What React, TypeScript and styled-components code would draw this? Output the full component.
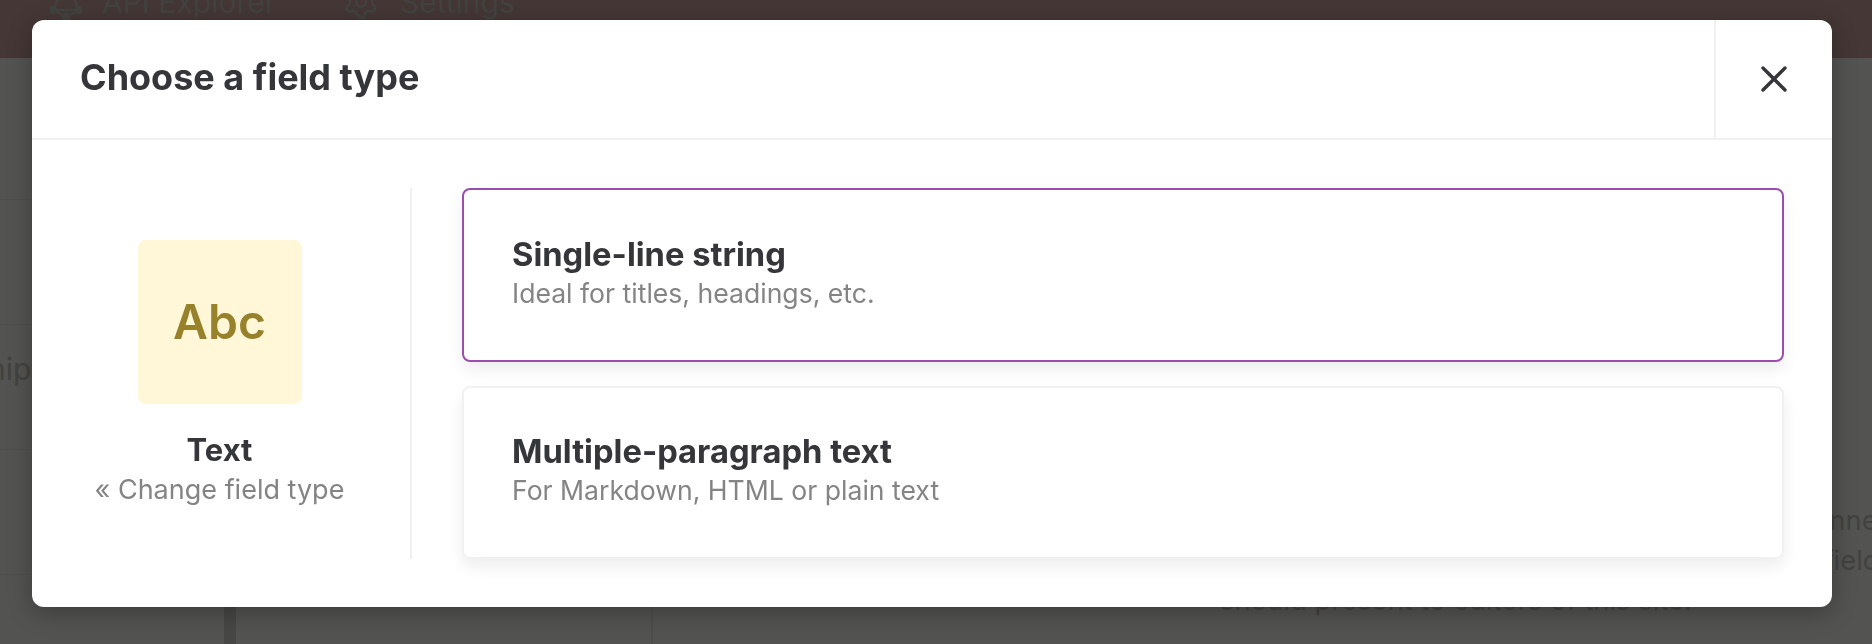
import { Settings } from "lucide-react";
import styled, { createGlobalStyle } from "styled-components";

const GlobalStyle = createGlobalStyle`
  html, body {
    margin: 0;
    height: 100%;
    overflow: hidden;
    background: #535351;
    font-family: Inter, "Liberation Sans", sans-serif;
  }
`;

const Page = styled.div`
  height: 644px;
  overflow: hidden;
  display: flex;
  flex-direction: column;
  color: #424240;
`;

const Nav = styled.nav`
  flex: none;
  height: 58px;
  display: flex;
  gap: 66px;
  padding-left: 50px;
  background: #443735;
`;

const NavItem = styled.div`
  display: flex;
  align-items: center;
  gap: 20px;
  height: 4px;
  font-size: 30px;
  line-height: 30px;
`;

const Columns = styled.div`
  flex: 1;
  display: flex;
  min-height: 0;
`;

const Sidebar = styled.aside`
  flex: none;
  width: 224px;
  padding-top: 17px;
  border-right: 12px solid #474745;
`;

const SideRow = styled.div`
  height: 124px;
  padding-top: 24px;
  box-sizing: border-box;
  margin-bottom: 1px;
  box-shadow: 0 1px 0 #4f4f4d;
  font-size: 30px;
  line-height: 40px;
  white-space: nowrap;
  overflow: hidden;
`;

const SideLabel = styled.span<{ $pull: number }>`
  display: block;
  margin-left: ${(p) => -p.$pull}px;
`;

const ListColumn = styled.div`
  flex: none;
  width: 415px;
  border-right: 2px solid #4d4d4b;
`;

const Help = styled.div`
  flex: 1;
  min-width: 0;
  overflow: hidden;
  padding: 442px 0 0 567px;
  font-size: 27.4px;
  line-height: 40px;
  white-space: nowrap;
  text-align: right;
`;

const HelpLine = styled.div<{ $bleed?: number }>`
  margin-right: ${(p) => -(p.$bleed ?? 0)}px;
  &:last-child {
    text-align: left;
  }
`;

const Overlay = styled.div`
  position: fixed;
  inset: 0;
  padding: 20px 40px 37px 32px;
  display: flex;
  align-items: flex-start;
`;

const Modal = styled.div`
  width: 1800px;
  height: 587px;
  display: flex;
  flex-direction: column;
  background: #fff;
  border-radius: 12px;
  box-shadow: 0 6px 24px rgba(0, 0, 0, 0.28);
`;

const ModalHeader = styled.header`
  flex: none;
  height: 120px;
  box-sizing: border-box;
  display: flex;
  align-items: stretch;
  border-bottom: 2px solid #f0f0f0;
`;

const ModalTitle = styled.h1`
  flex: 1;
  margin: 0;
  padding: 0 0 4px 48px;
  display: flex;
  align-items: center;
  font-size: 36px;
  font-weight: 700;
  color: #34363a;
`;

const CloseButton = styled.button`
  flex: none;
  width: 118px;
  padding: 0;
  display: flex;
  align-items: center;
  justify-content: center;
  background: none;
  border: 0;
  border-left: 2px solid #f0f0f0;
  color: #34363a;
`;

const ModalBody = styled.div`
  flex: 1;
  min-height: 0;
  display: flex;
  gap: 50px;
  padding: 48px;
`;

const Chosen = styled.aside`
  flex: none;
  width: 332px;
  box-sizing: border-box;
  padding: 2px 51px 0 0;
  border-right: 2px solid #f0f0f0;
  display: flex;
  flex-direction: column;
  align-items: center;
  justify-content: center;
`;

const TypeTile = styled.div`
  width: 164px;
  height: 164px;
  display: flex;
  align-items: center;
  justify-content: center;
  border-radius: 8px;
  background: #fff7d8;
  color: #97812b;
  font-size: 48px;
  font-weight: 600;
`;

const ChosenName = styled.div`
  margin-top: 26px;
  font-size: 31px;
  line-height: 40px;
  font-weight: 700;
  color: #34363a;
`;

const ChangeLink = styled.a`
  font-size: 27px;
  line-height: 40px;
  color: #848484;
`;

const Options = styled.div`
  flex: 1;
  display: grid;
  grid-template-rows: 1fr 1fr;
  gap: 24px;
`;

const Option = styled.div<{ $selected?: boolean }>`
  display: flex;
  flex-direction: column;
  justify-content: center;
  padding: 0 0 4px 48px;
  border: 2px solid ${(p) => (p.$selected ? "#9b4dae" : "#f1f1f1")};
  border-radius: 8px;
  box-shadow: 0 8px 16px rgba(0, 0, 0, 0.07);
`;

const OptionTitle = styled.div`
  font-size: 32.7px;
  line-height: 40px;
  font-weight: 700;
  color: #34363a;
`;

const OptionHint = styled.div`
  font-size: 26.6px;
  line-height: 38px;
  color: #848484;
`;

const options = [
  { title: "Single-line string", hint: "Ideal for titles, headings, etc.", selected: true },
  { title: "Multiple-paragraph text", hint: "For Markdown, HTML or plain text", selected: false },
];

const GraphIcon = () => (
  <svg width="32" height="40" viewBox="0 0 32 40" fill="none" stroke="currentColor" strokeWidth="2.5">
    <path d="M16 0 3 28l13 7 13-7L16 0ZM3 28h26" />
    <circle cx="3" cy="28" r="3" fill="currentColor" />
    <circle cx="29" cy="28" r="3" fill="currentColor" />
    <circle cx="16" cy="35" r="3" fill="currentColor" />
  </svg>
);

const CloseIcon = () => (
  <svg width="26" height="26" viewBox="0 0 26 26" fill="none" stroke="currentColor" strokeWidth="3.4" strokeLinecap="round">
    <path d="M2 2 24 24M24 2 2 24" />
  </svg>
);

export default function App() {
  return (
    <>
      <GlobalStyle />
      <Page>
        <Nav>
          <NavItem>
            <GraphIcon />
            API Explorer
          </NavItem>
          <NavItem>
            <Settings size={38} strokeWidth={1.6} />
            Settings
          </NavItem>
        </Nav>
        <Columns>
          <Sidebar>
            <SideRow />
            <SideRow />
            <SideRow>
              <SideLabel $pull={141}>Relationship</SideLabel>
            </SideRow>
            <SideRow>
              <SideLabel $pull={60}>Text</SideLabel>
            </SideRow>
          </Sidebar>
          <ListColumn />
          <Help>
            <HelpLine $bleed={84}>Links and connections</HelpLine>
            <HelpLine $bleed={22}>of the fields</HelpLine>
            <HelpLine>should present to editors of this site.</HelpLine>
          </Help>
        </Columns>
      </Page>
      <Overlay>
        <Modal>
          <ModalHeader>
            <ModalTitle>Choose a field type</ModalTitle>
            <CloseButton aria-label="Close">
              <CloseIcon />
            </CloseButton>
          </ModalHeader>
          <ModalBody>
            <Chosen>
              <TypeTile>Abc</TypeTile>
              <ChosenName>Text</ChosenName>
              <ChangeLink>« Change field type</ChangeLink>
            </Chosen>
            <Options>
              {options.map((o) => (
                <Option key={o.title} $selected={o.selected}>
                  <OptionTitle>{o.title}</OptionTitle>
                  <OptionHint>{o.hint}</OptionHint>
                </Option>
              ))}
            </Options>
          </ModalBody>
        </Modal>
      </Overlay>
    </>
  );
}
